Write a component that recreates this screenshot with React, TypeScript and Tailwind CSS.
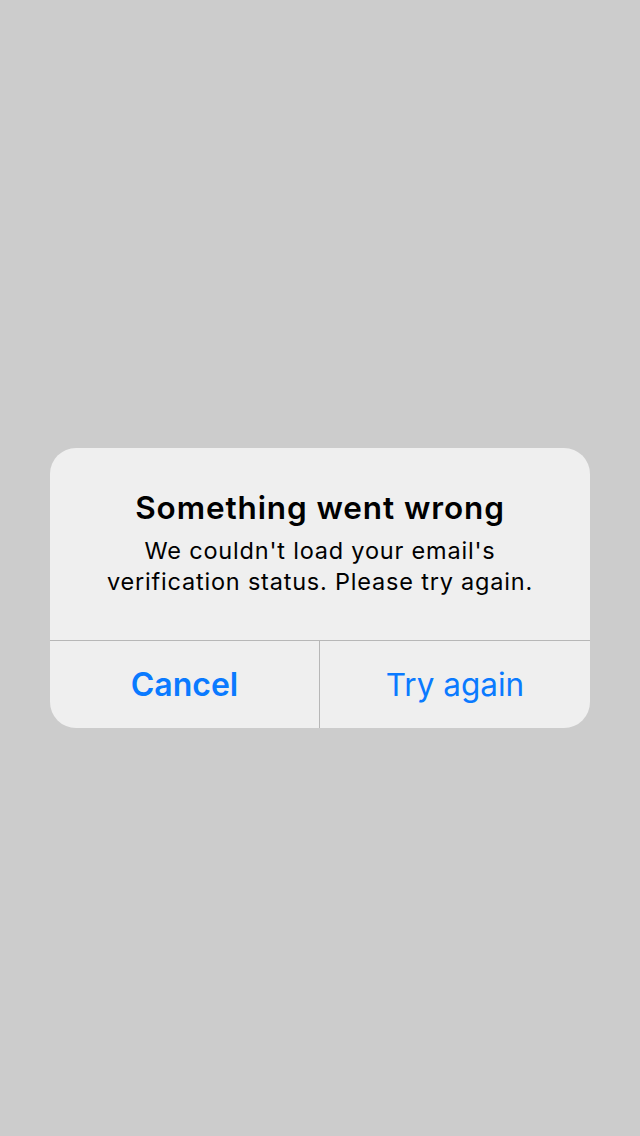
import React from "react";

const App = () => {
  return (
    <div
      className="w-[640px] h-[1136px] bg-[#cccccc] flex items-center justify-center"
      style={{ fontFamily: "Inter, 'Noto Sans', sans-serif" }}
    >
      <div className="w-[540px] mt-[40px] rounded-[26px] bg-[#efefef] overflow-hidden">
        {/* message */}
        <div className="h-[192px] pt-[40px] px-4 text-center text-black">
          <h2 className="text-[31.5px] leading-[40px] font-semibold tracking-[0.9px]">
            Something went wrong
          </h2>
          <p className="mt-[7px] text-[23.5px] leading-[31px] tracking-[0.8px]">
            We couldn't load your email's
            <br />
            verification status. Please try again.
          </p>
        </div>
        {/* buttons */}
        <div className="grid grid-cols-2 h-[88px] border-t border-[#b7b7b7]">
          <button className="text-[32px] font-semibold text-[#0a7aff] border-r border-[#b7b7b7]">
            Cancel
          </button>
          <button className="text-[31.5px] text-[#0a7aff]">Try again</button>
        </div>
      </div>
    </div>
  );
};

export default App;
